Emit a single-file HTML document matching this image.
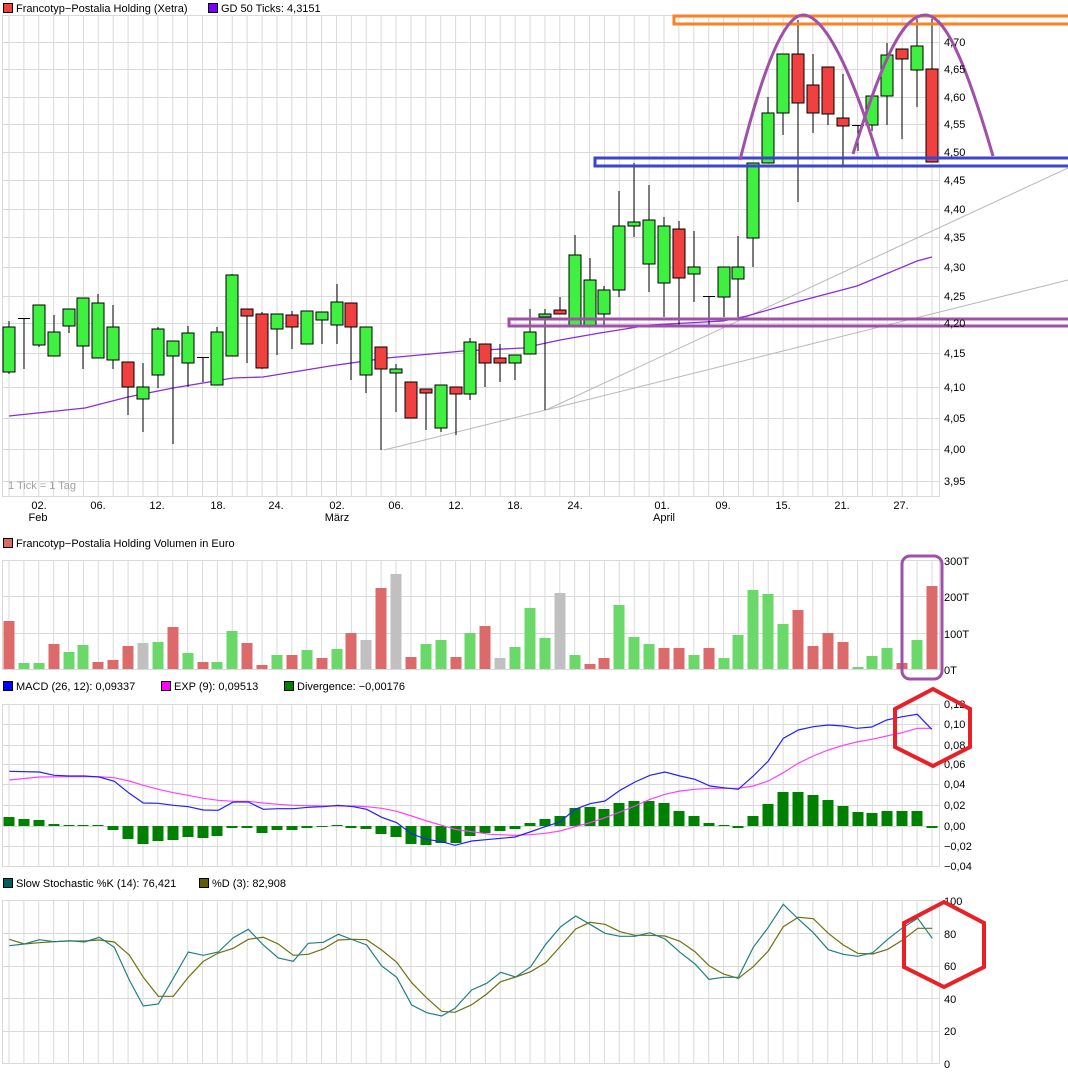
<!DOCTYPE html>
<html><head><meta charset="utf-8"><style>
html,body{margin:0;padding:0;background:#fff;}
svg{display:block;font-family:"Liberation Sans",sans-serif;font-size:11px;}
</style></head><body>
<svg width="1068" height="1076" viewBox="0 0 1068 1076" xmlns="http://www.w3.org/2000/svg">
<defs>
<pattern id="vg" x="1.5" y="0" width="14.887" height="2000" patternUnits="userSpaceOnUse">
<line x1="7.5" y1="0" x2="7.5" y2="2000" stroke="#d9d9d9" stroke-width="1"/>
</pattern>
</defs>
<rect width="1068" height="1076" fill="#fff"/>

<!-- ===== Main panel ===== -->
<rect x="2" y="15" width="938" height="482" fill="url(#vg)"/>
<g stroke="#d9d9d9" stroke-width="1" fill="none">
<rect x="2.5" y="15.5" width="937" height="481"/>
<path d="M2 42.5H940M2 69.5H940M2 97.5H940M2 124.5H940M2 152.5H940M2 180.5H940M2 209.5H940M2 237.5H940M2 267.5H940M2 296.5H940M2 323.5H940M2 353.5H940M2 387.5H940M2 418.5H940M2 449.5H940M2 481.5H940"/>
</g>
<!-- legend -->
<rect x="3.5" y="3.5" width="9" height="9" fill="#f04040" stroke="#000"/>
<text x="16" y="12">Francotyp−Postalia Holding (Xetra)</text>
<rect x="208.5" y="3.5" width="9" height="9" fill="#7a00ff" stroke="#000"/>
<text x="221" y="12">GD 50 Ticks: 4,3151</text>
<text x="8" y="489" fill="#a0a0a0">1 Tick = 1 Tag</text>

<!-- gray trend lines -->
<g stroke="#b8b8b8" stroke-width="1" fill="none">
<path d="M384 450L546 410L1068 280"/>
<path d="M546 410L1068 168"/>
</g>
<!-- MA line -->
<polyline fill="none" stroke="#8a2be2" stroke-width="1.3" points="9,416 85,408 128,397 173,388 233,378 263,377 330,366 387,358 463,351 523,348 560,340 600,333 650,325 723,321 747,316 800,301 857,286 917,261 932,257"/>

<!-- candles -->
<g stroke="#000" stroke-width="1">
<path d="M9 321V374M24 318V369M39 305V347M54 315V356M69 309V333M83 298V369M98 294V358M113 305V369M128 362V415M143 363V432M158 327V388M173 341V444M188 326V387M203 357V382M217 327V385M232 274V356M247 309V363M262 312V369M277 314V355M292 311V349M307 311V344M322 312V344M337 284V344M351 303V380M366 327V393M381 347V450M396 364V412M411 382V418M426 389V430M441 385V432M456 387V435M470 338V400M485 344V387M500 344V382M515 355V380M530 309V354M545 309V410M560 297V314M575 235V326M590 258V326M604 286V326M619 191V297M634 163V237M649 185V292M664 217V317M679 221V325M694 231V302M709 296V325M724 267V317M738 236V317M753 163V267M768 97V163M783 54V135M798 20V202M813 54V133M828 67V125M843 74V165M858 125V151M872 96V131M887 43V125M902 49V139M917 19V107M932 19V162"/>
<path d="M18 318.5H30M197 357.5H209M703 296.5H715M852 125.5H864"/>
</g>
<g stroke="#000" stroke-width="1">
<g fill="#40f040">
<rect x="3" y="327" width="12" height="45"/>
<rect x="33" y="305" width="12" height="40"/>
<rect x="48" y="332" width="12" height="24"/>
<rect x="63" y="309" width="12" height="17"/>
<rect x="77" y="298" width="12" height="48"/>
<rect x="92" y="303" width="12" height="55"/>
<rect x="107" y="327" width="12" height="33"/>
<rect x="137" y="387" width="12" height="12"/>
<rect x="152" y="329" width="12" height="46"/>
<rect x="167" y="341" width="12" height="15"/>
<rect x="182" y="333" width="12" height="30"/>
<rect x="211" y="332" width="12" height="53"/>
<rect x="226" y="275" width="12" height="81"/>
<rect x="271" y="314" width="12" height="15"/>
<rect x="301" y="311" width="12" height="33"/>
<rect x="316" y="312" width="12" height="8"/>
<rect x="331" y="302" width="12" height="23"/>
<rect x="360" y="327" width="12" height="48"/>
<rect x="390" y="369" width="12" height="4"/>
<rect x="435" y="385" width="12" height="43"/>
<rect x="464" y="342" width="12" height="52"/>
<rect x="509" y="355" width="12" height="8"/>
<rect x="524" y="332" width="12" height="22"/>
<rect x="539" y="314" width="12" height="3"/>
<rect x="569" y="255" width="12" height="71"/>
<rect x="584" y="280" width="12" height="46"/>
<rect x="598" y="290" width="12" height="24"/>
<rect x="613" y="226" width="12" height="64"/>
<rect x="628" y="222" width="12" height="4"/>
<rect x="643" y="220" width="12" height="44"/>
<rect x="658" y="226" width="12" height="57"/>
<rect x="688" y="267" width="12" height="7"/>
<rect x="718" y="267" width="12" height="30"/>
<rect x="732" y="267" width="12" height="12"/>
<rect x="747" y="163" width="12" height="75"/>
<rect x="762" y="113" width="12" height="50"/>
<rect x="777" y="54" width="12" height="59"/>
<rect x="866" y="96" width="12" height="29"/>
<rect x="881" y="55" width="12" height="41"/>
<rect x="911" y="46" width="12" height="24"/>
</g>
<g fill="#f04040">
<rect x="122" y="362" width="12" height="25"/>
<rect x="241" y="309" width="12" height="7"/>
<rect x="256" y="314" width="12" height="54"/>
<rect x="286" y="315" width="12" height="12"/>
<rect x="345" y="303" width="12" height="24"/>
<rect x="375" y="347" width="12" height="22"/>
<rect x="405" y="382" width="12" height="36"/>
<rect x="420" y="389" width="12" height="4"/>
<rect x="450" y="387" width="12" height="7"/>
<rect x="479" y="344" width="12" height="19"/>
<rect x="494" y="358" width="12" height="5"/>
<rect x="554" y="310" width="12" height="4"/>
<rect x="673" y="229" width="12" height="49"/>
<rect x="792" y="54" width="12" height="49"/>
<rect x="807" y="85" width="12" height="28"/>
<rect x="822" y="67" width="12" height="47"/>
<rect x="837" y="118" width="12" height="8"/>
<rect x="896" y="49" width="12" height="10"/>
<rect x="926" y="69" width="12" height="93"/>
</g>
</g>

<!-- overlays -->
<rect x="674" y="16" width="400" height="8" fill="none" stroke="#ff8020" stroke-width="3"/>
<rect x="595" y="158" width="480" height="8" fill="none" stroke="#3c46c8" stroke-width="3"/>
<rect x="509" y="319" width="570" height="7" fill="none" stroke="#a050a8" stroke-width="3"/>
<g fill="none" stroke="#a050a8" stroke-width="3">
<path d="M740 160 C 770 40, 790 15, 803 15 C 820 15, 845 50, 878 157"/>
<path d="M853 154 C 885 50, 905 15, 925 15 C 945 15, 965 60, 993 156"/>
</g>

<!-- price labels -->
<g font-size="11">
<text x="944" y="46">4,70</text><text x="944" y="73">4,65</text><text x="944" y="101">4,60</text><text x="944" y="128">4,55</text><text x="944" y="156">4,50</text><text x="944" y="184">4,45</text><text x="944" y="213">4,40</text><text x="944" y="241">4,35</text><text x="944" y="271">4,30</text><text x="944" y="300">4,25</text><text x="944" y="327">4,20</text><text x="944" y="357">4,15</text><text x="944" y="391">4,10</text><text x="944" y="422">4,05</text><text x="944" y="453">4,00</text><text x="944" y="485">3,95</text>
</g>
<!-- date labels -->
<g text-anchor="middle">
<text x="39" y="509">02.</text><text x="98" y="509">06.</text><text x="157" y="509">12.</text><text x="218" y="509">18.</text><text x="276" y="509">24.</text><text x="337" y="509">02.</text><text x="396" y="509">06.</text><text x="456" y="509">12.</text><text x="515" y="509">18.</text><text x="575" y="509">24.</text><text x="662" y="509">01.</text><text x="723" y="509">09.</text><text x="783" y="509">15.</text><text x="842" y="509">21.</text><text x="901" y="509">27.</text>
<text x="38" y="521">Feb</text><text x="337" y="521">März</text><text x="664" y="521">April</text>
</g>

<!-- ===== Volume panel ===== -->
<rect x="3.5" y="538.5" width="9" height="9" fill="#dc6a6a" stroke="#000"/>
<text x="16" y="547">Francotyp−Postalia Holding Volumen in Euro</text>
<rect x="2" y="560" width="938" height="109" fill="url(#vg)"/>
<g stroke="#d9d9d9" fill="none"><rect x="2.5" y="560.5" width="937" height="109"/><path d="M2 596.5H940M2 633.5H940"/></g>
<g fill="#dc6a6a">
<rect x="3.5" y="621" width="11" height="48"/><rect x="48.5" y="644" width="11" height="25"/><rect x="92.5" y="662" width="11" height="7"/><rect x="107.5" y="660" width="11" height="9"/><rect x="122.5" y="646" width="11" height="23"/><rect x="167.5" y="627" width="11" height="42"/><rect x="197.5" y="662" width="11" height="7"/><rect x="241.5" y="643" width="11" height="26"/><rect x="256.5" y="665" width="11" height="4"/><rect x="286.5" y="655" width="11" height="14"/><rect x="316.5" y="658" width="11" height="11"/><rect x="345.5" y="633" width="11" height="36"/><rect x="375.5" y="588" width="11" height="81"/><rect x="405.5" y="657" width="11" height="12"/><rect x="450.5" y="657" width="11" height="12"/><rect x="479.5" y="626" width="11" height="43"/><rect x="584.5" y="664" width="11" height="5"/><rect x="598.5" y="658" width="11" height="11"/><rect x="658.5" y="648" width="11" height="21"/><rect x="673.5" y="648" width="11" height="21"/><rect x="703.5" y="648" width="11" height="21"/><rect x="792.5" y="610" width="11" height="59"/><rect x="807.5" y="646" width="11" height="23"/><rect x="822.5" y="633" width="11" height="36"/><rect x="837.5" y="642" width="11" height="27"/><rect x="896.5" y="663" width="11" height="6"/><rect x="926.5" y="586" width="11" height="83"/>
</g>
<g fill="#6ad96a">
<rect x="18.5" y="663" width="11" height="6"/><rect x="33.5" y="663" width="11" height="6"/><rect x="63.5" y="652" width="11" height="17"/><rect x="77.5" y="645" width="11" height="24"/><rect x="152.5" y="642" width="11" height="27"/><rect x="182.5" y="653" width="11" height="16"/><rect x="211.5" y="662" width="11" height="7"/><rect x="226.5" y="631" width="11" height="38"/><rect x="271.5" y="655" width="11" height="14"/><rect x="301.5" y="650" width="11" height="19"/><rect x="331.5" y="649" width="11" height="20"/><rect x="420.5" y="644" width="11" height="25"/><rect x="435.5" y="640" width="11" height="29"/><rect x="464.5" y="633" width="11" height="36"/><rect x="509.5" y="647" width="11" height="22"/><rect x="524.5" y="608" width="11" height="61"/><rect x="539.5" y="638" width="11" height="31"/><rect x="569.5" y="655" width="11" height="14"/><rect x="613.5" y="605" width="11" height="64"/><rect x="628.5" y="637" width="11" height="32"/><rect x="643.5" y="644" width="11" height="25"/><rect x="688.5" y="655" width="11" height="14"/><rect x="718.5" y="658" width="11" height="11"/><rect x="732.5" y="635" width="11" height="34"/><rect x="747.5" y="590" width="11" height="79"/><rect x="762.5" y="594" width="11" height="75"/><rect x="777.5" y="624" width="11" height="45"/><rect x="852.5" y="667" width="11" height="2"/><rect x="866.5" y="656" width="11" height="13"/><rect x="881.5" y="648" width="11" height="21"/><rect x="911.5" y="640" width="11" height="29"/>
</g>
<g fill="#c0c0c0">
<rect x="137.5" y="643" width="11" height="26"/><rect x="360.5" y="640" width="11" height="29"/><rect x="390.5" y="574" width="11" height="95"/><rect x="494.5" y="658" width="11" height="11"/><rect x="554.5" y="593" width="11" height="76"/>
</g>
<text x="944" y="565">300T</text><text x="944" y="601">200T</text><text x="944" y="638">100T</text><text x="944" y="674">0T</text>
<rect x="902" y="556" width="40" height="123" rx="8" fill="none" stroke="#a050a8" stroke-width="3"/>

<!-- ===== MACD panel ===== -->
<rect x="3.5" y="681.5" width="9" height="9" fill="#0000ff" stroke="#000"/>
<text x="16" y="690">MACD (26, 12): 0,09337</text>
<rect x="161.5" y="681.5" width="9" height="9" fill="#ff00ff" stroke="#000"/>
<text x="174" y="690">EXP (9): 0,09513</text>
<rect x="284.5" y="681.5" width="9" height="9" fill="#008000" stroke="#000"/>
<text x="297" y="690">Divergence: −0,00176</text>
<rect x="2" y="704" width="938" height="162" fill="url(#vg)"/>
<g stroke="#d9d9d9" fill="none"><rect x="2.5" y="704.5" width="937" height="162"/><path d="M2 724.5H940M2 745.5H940M2 764.5H940M2 784.5H940M2 805.5H940M2 826.5H940M2 846.5H940"/></g>
<g fill="#008000">
<rect x="3.5" y="817" width="11" height="9"/><rect x="18.5" y="819" width="11" height="7"/><rect x="33.5" y="820" width="11" height="6"/><rect x="48.5" y="824" width="11" height="2"/><rect x="63.5" y="825" width="11" height="1"/><rect x="77.5" y="825" width="11" height="1"/><rect x="92.5" y="825" width="11" height="1"/>
<rect x="107.5" y="826" width="11" height="4"/><rect x="122.5" y="826" width="11" height="13"/><rect x="137.5" y="826" width="11" height="18"/><rect x="152.5" y="826" width="11" height="15"/><rect x="167.5" y="826" width="11" height="14"/><rect x="182.5" y="826" width="11" height="11"/><rect x="197.5" y="826" width="11" height="12"/><rect x="211.5" y="826" width="11" height="10"/><rect x="226.5" y="826" width="11" height="2"/><rect x="241.5" y="826" width="11" height="2"/><rect x="256.5" y="826" width="11" height="7"/><rect x="271.5" y="826" width="11" height="4"/><rect x="286.5" y="826" width="11" height="4"/><rect x="301.5" y="826" width="11" height="2"/><rect x="316.5" y="826" width="11" height="1"/><rect x="331.5" y="825" width="11" height="1"/><rect x="345.5" y="826" width="11" height="2"/><rect x="360.5" y="826" width="11" height="3"/><rect x="375.5" y="826" width="11" height="8"/><rect x="390.5" y="826" width="11" height="11"/><rect x="405.5" y="826" width="11" height="18"/><rect x="420.5" y="826" width="11" height="19"/><rect x="435.5" y="826" width="11" height="17"/><rect x="450.5" y="826" width="11" height="17"/><rect x="464.5" y="826" width="11" height="10"/><rect x="479.5" y="826" width="11" height="7"/><rect x="494.5" y="826" width="11" height="5"/><rect x="509.5" y="826" width="11" height="3"/>
<rect x="524.5" y="823" width="11" height="3"/><rect x="539.5" y="819" width="11" height="7"/><rect x="554.5" y="816" width="11" height="10"/><rect x="569.5" y="808" width="11" height="18"/><rect x="584.5" y="807" width="11" height="19"/><rect x="598.5" y="809" width="11" height="17"/><rect x="613.5" y="803" width="11" height="23"/><rect x="628.5" y="801" width="11" height="25"/><rect x="643.5" y="801" width="11" height="25"/><rect x="658.5" y="803" width="11" height="23"/><rect x="673.5" y="811" width="11" height="15"/><rect x="688.5" y="816" width="11" height="10"/><rect x="703.5" y="823" width="11" height="3"/><rect x="718.5" y="825" width="11" height="1"/>
<rect x="732.5" y="826" width="11" height="2"/><rect x="747.5" y="816" width="11" height="10"/><rect x="762.5" y="804" width="11" height="22"/><rect x="777.5" y="792" width="11" height="34"/><rect x="792.5" y="792" width="11" height="34"/><rect x="807.5" y="795" width="11" height="31"/><rect x="822.5" y="800" width="11" height="26"/><rect x="837.5" y="806" width="11" height="20"/><rect x="852.5" y="812" width="11" height="14"/><rect x="866.5" y="813" width="11" height="13"/><rect x="881.5" y="811" width="11" height="15"/><rect x="896.5" y="811" width="11" height="15"/><rect x="911.5" y="811" width="11" height="15"/><rect x="926.5" y="826" width="11" height="2"/>
</g>
<polyline fill="none" stroke="#ff40ff" stroke-width="1.2" points="9.3,780 39.3,777 69.3,776.7 99.3,776.7 114.3,777.7 129.3,781 143.3,785.3 158.3,789.3 173.3,792.7 188.3,795.3 203.3,798.3 218.3,800.3 233.3,801.3 248.3,801.3 263.3,803 278.3,804.3 293.3,805.3 308.3,805.7 323.3,806 338.3,806 353.3,806 366.7,806.7 381.7,808.3 396.7,811.3 411.7,816 426.7,821 441.7,825.3 455,829.3 471.7,831.7 490,834.3 515,835.3 530,834.7 545,833.3 560,831 575,826.7 590,822.7 605,817.7 620,812 635,806 650,799.3 665,794.3 680,791 695,789.3 710,788.3 738.3,788.3 753.3,786 768.3,781 783.3,772.7 798.3,763.3 813.3,756 828.3,750 843.3,745.3 856.7,742 871.7,739.3 886.7,736 902.3,732.7 917.3,728.3 931.7,728.3"/>
<polyline fill="none" stroke="#2020ff" stroke-width="1.2" points="9.3,771.3 39.3,772 54.3,775.3 69.3,776 84.3,776 99.3,777 114.3,781.3 129.3,793.3 143.3,803 158.3,803.3 173.3,805.3 188.3,806.7 203.3,810 218.3,810.3 233.3,802 248.3,802 263.3,809.3 278.3,808.7 293.3,808.7 308.3,807.3 323.3,806.7 338.3,805.3 353.3,806.7 366.7,809.3 381.7,817.3 396.7,822.7 411.7,834 426.7,839.3 441.7,841.7 455,845.3 471.7,841 490,839.3 515,837 530,832 545,826.7 560,822 575,809.3 590,803.7 605,801 620,790.3 635,782 650,775.3 665,772 680,776 695,779.3 710,786 723.3,787.7 738.3,789.3 753.3,776 768.3,761 783.3,738.3 798.3,730 813.3,726.7 828.3,725 843.3,726 856.7,728.3 871.7,727 886.7,720 902.3,716.7 917.3,714.3 931.7,729.3"/>
<g>
<text x="944" y="708">0,12</text><text x="944" y="728">0,10</text><text x="944" y="749">0,08</text><text x="944" y="768">0,06</text><text x="944" y="788">0,04</text><text x="944" y="809">0,02</text><text x="944" y="830">0,00</text><text x="944" y="850">−0,02</text><text x="944" y="870">−0,04</text>
</g>
<polygon points="933,689 970,709 970,747 933,766 895,747 895,709" fill="none" stroke="#e82028" stroke-width="4"/>

<!-- ===== Stochastic panel ===== -->
<rect x="3.5" y="878.5" width="9" height="9" fill="#006060" stroke="#000"/>
<text x="16" y="887">Slow Stochastic %K (14): 76,421</text>
<rect x="199.5" y="878.5" width="9" height="9" fill="#606000" stroke="#000"/>
<text x="212" y="887">%D (3): 82,908</text>
<rect x="2" y="900" width="938" height="163" fill="url(#vg)"/>
<g stroke="#d9d9d9" fill="none"><rect x="2.5" y="900.5" width="937" height="163"/><path d="M2 933.5H940M2 966.5H940M2 998.5H940M2 1031.5H940"/></g>
<polyline fill="none" stroke="#707010" stroke-width="1.2" points="9.3,939.3 24.3,944 39.3,942.7 54.3,941.7 69.3,941 84.3,941 99.3,940 114.3,942 129.3,955 143.3,977.3 158.3,996.3 173.3,996.3 188.3,977.3 203.3,961.3 218.3,953 233.3,948.3 248.3,939.3 263.3,937.3 278.3,944 293.3,955.3 308.3,954.3 323.3,949 338.3,940 353.3,939.3 366.7,939.7 381.7,950 396.7,962.3 411.7,982.7 426.7,998 441.7,1011.3 455,1012.3 471.7,1004.7 486.7,994 500.7,981.7 515.7,977 530.7,971.7 545.7,962.7 560.7,946 575.7,929 590,922.3 605,924.3 620,931.7 635,935.3 650,935.3 665,936 680,941.3 695,951.7 709,965.7 723.3,974 738.3,978.3 753.3,966.7 768.3,951 783.3,926.7 798.3,917.3 813.3,918.7 828.3,933.3 843.3,945 857.7,953.3 872.7,954 887.7,949.3 902.7,940 917.7,928.3 932.3,928.3"/>
<polyline fill="none" stroke="#208080" stroke-width="1.2" points="9.3,945.7 24.3,944 39.3,939.7 54.3,941.7 69.3,940.7 84.3,942 99.3,937.3 114.3,947.3 129.3,980 143.3,1006 158.3,1004 173.3,978.3 188.3,952 203.3,955.3 218.3,952 233.3,937.7 248.3,929.3 263.3,945 278.3,958 293.3,961.3 308.3,943.3 323.3,942.3 338.3,934.3 353.3,940 366.7,945 381.7,966 396.7,977.3 411.7,1005 426.7,1012.7 441.7,1016 455,1008.3 471.7,990 486.7,983.3 500.7,972.3 515.7,977 530.7,966.7 545.7,944.3 560.7,926.7 575.7,916 590,924.3 605,933.3 620,936.3 635,936.3 650,932.7 665,939 680,952.3 695,964 709,979.3 723.3,977.3 738.3,977.3 753.3,947.3 768.3,927.3 783.3,904.3 798.3,919 813.3,932.7 828.3,949.7 843.3,954.3 857.7,956.3 872.7,952.7 887.7,939.3 902.7,927.7 917.7,918.3 932.3,938.3"/>
<text x="944" y="905">100</text><text x="944" y="938">80</text><text x="944" y="970">60</text><text x="944" y="1003">40</text><text x="944" y="1035">20</text><text x="944" y="1068">0</text>
<polygon points="944,902 984,923 984,967 944,987 904,967 904,923" fill="none" stroke="#e82028" stroke-width="4"/>
</svg>
</body></html>
